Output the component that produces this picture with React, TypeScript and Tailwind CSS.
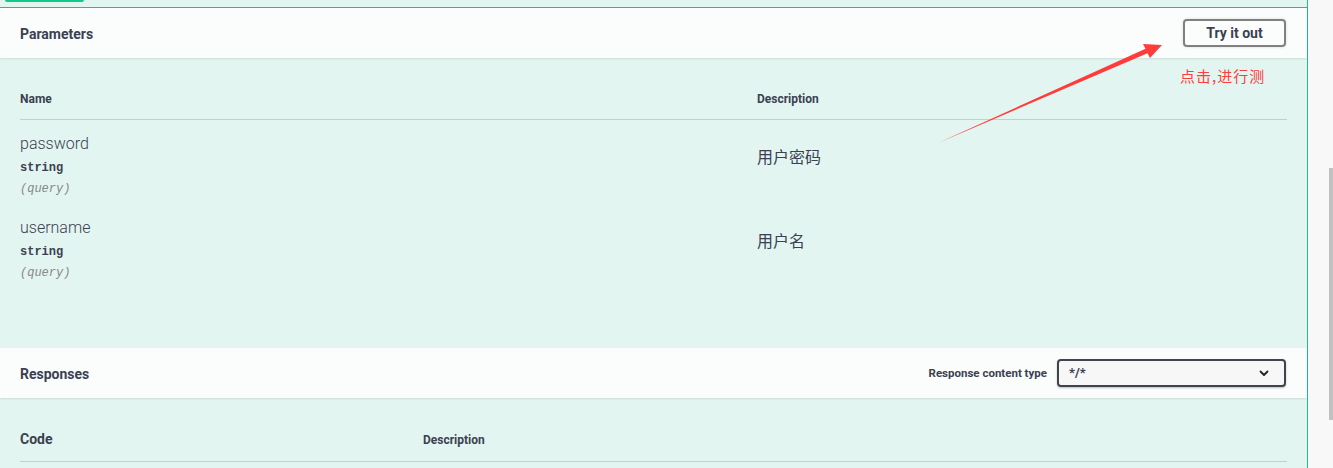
import React from "react";

const params = [
  { name: "password", type: "string", where: "(query)", desc: "用户密码" },
  { name: "username", type: "string", where: "(query)", desc: "用户名" },
];

const sans = "font-['Roboto','Noto_Sans_CJK_SC',sans-serif]";
const mono = "font-['Liberation_Mono','DejaVu_Sans_Mono',monospace]";

const App = () => {
  return (
    <div className={`relative flex h-[468px] w-full overflow-hidden text-[#3b4151] ${sans}`}>
      <div className="flex flex-1 flex-col border-r border-[#1fbf8f] bg-[#e2f5f0]">
        {/* tab strip above the body */}
        <div className="h-[7px] pl-[5px]">
          <div className="h-[2px] w-[79px] rounded-b-[3px] bg-[#13c98a]"></div>
        </div>

        <div className="flex flex-1 flex-col border-t border-[#1fbf8f]">
          {/* parameters header */}
          <div className="flex h-[50px] items-center justify-between bg-[#fafdfc] px-5 shadow-[0_1px_2px_rgba(0,0,0,0.1)]">
            <h4 className="mt-[2px] text-[14px] font-bold">Parameters</h4>
            <button className="mr-[1px] h-[28px] w-[103px] rounded-[4px] border-2 border-[#808080] text-[14px] font-bold shadow-[0_0_3px_rgba(0,0,0,0.15)]">
              Try it out
            </button>
          </div>

          {/* parameters table */}
          <div className="h-[290px] px-5 pt-[33px]">
            <div className="flex border-b border-[#c2d1cd] pb-[12px] text-[12px] leading-[16px] font-bold">
              <div className="w-[737px]">Name</div>
              <div>Description</div>
            </div>
            {params.map((p) => (
              <div key={p.name} className="flex h-[84px]">
                <div className="w-[737px] pt-[14px]">
                  <div className="text-[16px] leading-[20px] font-light">{p.name}</div>
                  <div className={`mt-[6px] text-[12px] leading-[16px] font-semibold ${mono}`}>{p.type}</div>
                  <div className={`mt-[5px] text-[12px] leading-[16px] text-[#888] italic ${mono}`}>{p.where}</div>
                </div>
                <div className="pt-[27px] text-[16px] leading-[22px]">{p.desc}</div>
              </div>
            ))}
          </div>

          {/* responses header */}
          <div className="flex h-[50px] items-center justify-between bg-[#fafdfc] px-5 shadow-[0_1px_2px_rgba(0,0,0,0.1)]">
            <h4 className="mt-[2px] text-[14px] font-bold">Responses</h4>
            <div className="flex items-center gap-[10px]">
              <span className="mt-[2px] text-[11.5px] font-bold">Response content type</span>
              <div className="mr-[1px] flex h-[28px] w-[229px] items-center justify-between rounded-[4px] border-2 border-[#41444e] bg-[#f7f7f7] pr-[15px] pl-[10px] shadow-[0_1px_2px_rgba(0,0,0,0.25)]">
                <span className="text-[13px] font-bold">*/*</span>
                <svg width="10" height="7" viewBox="0 0 10 7" fill="none">
                  <path d="M1.5 1.5 5 5l3.5-3.5" stroke="#222" strokeWidth="1.8" strokeLinecap="round" strokeLinejoin="round" />
                </svg>
              </div>
            </div>
          </div>

          {/* responses table */}
          <div className="px-5 pt-[31px]">
            <div className="flex items-end border-b border-[#c2d1cd] pb-[12px] font-bold">
              <div className="w-[403px] text-[14px] leading-[20px]">Code</div>
              <div className="text-[12px] leading-[18px]">Description</div>
            </div>
          </div>
        </div>
      </div>

      {/* scrollbar */}
      <div className="flex w-[25px] justify-end bg-[#f8f8f8] pt-[168px]">
        <div className="h-[252px] w-[4px] bg-[#c1c1c1]"></div>
      </div>

      {/* red annotation */}
      <svg className="pointer-events-none absolute top-0 left-0" width="1333" height="468">
        <polygon
          points="938,143 1145.5,48.7 1143,44 1162,45 1150,58 1147.5,53.3"
          fill="#ff3b3b"
        />
      </svg>
      <div className="absolute top-[66px] left-[1180px] text-[15px] leading-[20px] tracking-[1px] text-[#ff3d3d] font-['Noto_Sans_CJK_SC',sans-serif]">
        点击,进行测
      </div>
    </div>
  );
};

export default App;
